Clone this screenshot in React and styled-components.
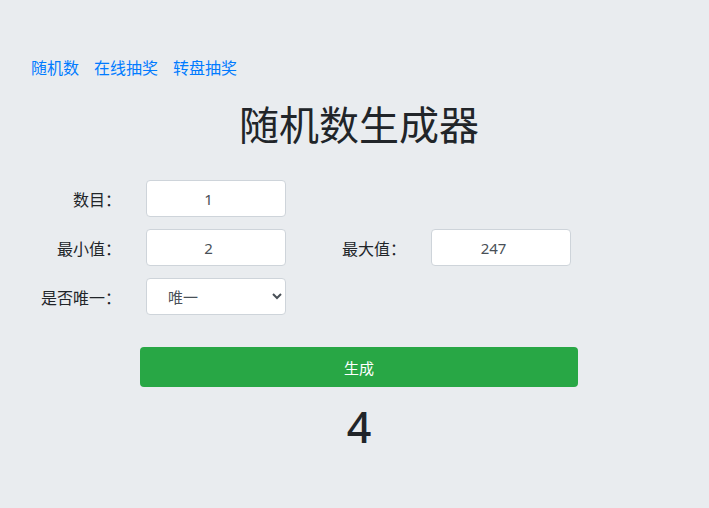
import React, { useState } from "react";
import styled, { createGlobalStyle } from "styled-components";

const GlobalStyle = createGlobalStyle`
  html, body {
    margin: 0;
    background: #e9ecef;
    font-family: "Noto Sans", "Noto Sans CJK SC", sans-serif;
    color: #212529;
  }
`;

const Page = styled.div`
  width: 682px;
  margin-left: 18px;
  min-height: 508px;
`;

const Nav = styled.nav`
  display: flex;
  gap: 15px;
  padding: 56px 0 0 13px;
`;

const NavLink = styled.a`
  font-size: 16px;
  line-height: 24px;
  color: #007bff;
  text-decoration: none;
  cursor: pointer;
`;

const Title = styled.h1`
  margin: 21px 0 0;
  text-align: center;
  font-size: 40px;
  line-height: 48px;
  font-weight: 400;
`;

const Form = styled.div`
  display: grid;
  grid-template-columns: 95px 140px 95px 140px;
  column-gap: 25px;
  row-gap: 12px;
  margin: 31px 0 0 8px;
`;

const Label = styled.label`
  display: flex;
  align-items: center;
  justify-content: flex-end;
  font-size: 16px;
  white-space: nowrap;
`;

const Field = styled.input`
  box-sizing: border-box;
  height: 37px;
  width: 140px;
  margin: 0;
  padding: 0 15px 0 0;
  border: 1px solid #ced4da;
  border-radius: 4px;
  background: #fff;
  text-align: center;
  font-family: inherit;
  font-size: 15px;
  color: #495057;
  outline: none;
`;

const Select = styled.select`
  box-sizing: border-box;
  height: 37px;
  width: 140px;
  margin: 0;
  border: 1px solid #ced4da;
  border-radius: 4px;
  background: #fff;
  padding: 0 8px 0 17px;
  font-family: inherit;
  font-size: 15px;
  color: #495057;
  outline: none;
`;

const Button = styled.button`
  display: block;
  margin: 32px auto 0;
  width: 438px;
  height: 40px;
  border: none;
  border-radius: 4px;
  background: #28a745;
  color: #fff;
  font-family: inherit;
  font-size: 15px;
  cursor: pointer;
`;

const Result = styled.div`
  margin-top: 12px;
  text-align: center;
  font-size: 43px;
  line-height: 55px;
  font-weight: 500;
`;

export default function App() {
  const [count, setCount] = useState("1");
  const [min, setMin] = useState("2");
  const [max, setMax] = useState("247");
  const [unique, setUnique] = useState("1");
  const [result, setResult] = useState("4");

  const generate = () => {
    const lo = parseInt(min, 10) || 0;
    const hi = parseInt(max, 10) || 0;
    const n = parseInt(count, 10) || 1;
    const out = [];
    while (out.length < n) {
      const v = lo + Math.floor(Math.random() * (hi - lo + 1));
      if (unique === "1" && out.includes(v) && out.length < hi - lo + 1) continue;
      out.push(v);
    }
    setResult(out.join(" "));
  };

  return (
    <Page>
      <GlobalStyle />
      <Nav>
        <NavLink>随机数</NavLink>
        <NavLink>在线抽奖</NavLink>
        <NavLink>转盘抽奖</NavLink>
      </Nav>
      <Title>随机数生成器</Title>
      <Form>
        <Label>数目：</Label>
        <Field value={count} onChange={(e) => setCount(e.target.value)} />
        <span />
        <span />
        <Label>最小值：</Label>
        <Field value={min} onChange={(e) => setMin(e.target.value)} />
        <Label>最大值：</Label>
        <Field value={max} onChange={(e) => setMax(e.target.value)} />
        <Label>是否唯一：</Label>
        <Select value={unique} onChange={(e) => setUnique(e.target.value)}>
          <option value="1">唯一</option>
          <option value="0">不唯一</option>
        </Select>
      </Form>
      <Button onClick={generate}>生成</Button>
      <Result>{result}</Result>
    </Page>
  );
}
